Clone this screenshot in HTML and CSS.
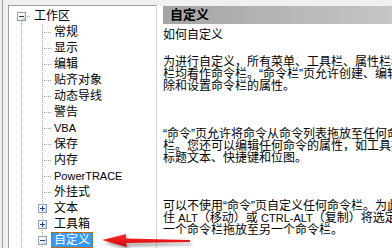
FILE: index.html
```html
<!DOCTYPE html>
<html>
<head>
<meta charset="utf-8">
<link rel="stylesheet" href="styles.css">
</head>
<body>
<div class="page">
  <div class="tree">
    <div class="row root">
      <span class="g1"><span class="box minus"></span></span>
      <span class="label">工作区</span>
    </div>
    <div class="row"><span class="g1 vl"></span><span class="g2 vl hc"></span><span class="label">常规</span></div>
    <div class="row"><span class="g1 vl"></span><span class="g2 vl hc"></span><span class="label">显示</span></div>
    <div class="row"><span class="g1 vl"></span><span class="g2 vl hc"></span><span class="label">编辑</span></div>
    <div class="row"><span class="g1 vl"></span><span class="g2 vl hc"></span><span class="label">贴齐对象</span></div>
    <div class="row"><span class="g1 vl"></span><span class="g2 vl hc"></span><span class="label">动态导线</span></div>
    <div class="row"><span class="g1 vl"></span><span class="g2 vl hc"></span><span class="label">警告</span></div>
    <div class="row"><span class="g1 vl"></span><span class="g2 vl hc"></span><span class="label lat">VBA</span></div>
    <div class="row"><span class="g1 vl"></span><span class="g2 vl hc"></span><span class="label">保存</span></div>
    <div class="row"><span class="g1 vl"></span><span class="g2 vl hc"></span><span class="label">内存</span></div>
    <div class="row"><span class="g1 vl"></span><span class="g2 vl hc"></span><span class="label lat">PowerTRACE</span></div>
    <div class="row"><span class="g1 vl"></span><span class="g2 vl hc"></span><span class="label">外挂式</span></div>
    <div class="row"><span class="g1 vl"></span><span class="g2 vl"><span class="box plus"></span></span><span class="label">文本</span></div>
    <div class="row"><span class="g1 vl"></span><span class="g2 vl"><span class="box plus"></span></span><span class="label">工具箱</span></div>
    <div class="row"><span class="g1 vl"></span><span class="g2 vl"><span class="box minus"></span></span><span class="label selected">自定义</span></div>
  </div>
  <div class="panel">
    <div class="header">自定义</div>
    <div class="content">
      <p class="p1">如何自定义</p>
      <p class="p2">为进行自定义，所有菜单、工具栏、属性栏和状态<br>栏均看作命令栏。“命令栏”页允许创建、编辑、删<br>除和设置命令栏的属性。</p>
      <p class="p3">“命令”页允许将命令从命令列表拖放至任何命令<br>栏。您还可以编辑任何命令的属性，如工具提示、<br>标题文本、快捷键和位图。</p>
      <p class="p4">可以不使用“命令”页自定义任何命令栏。为此，请按<br>住 <span class="lat">ALT</span>（移动）或 <span class="lat">CTRL-ALT</span>（复制）将选定项从<br>一个命令栏拖放至另一个命令栏。</p>
    </div>
  </div>
</div>
<svg class="arrow" width="110" height="22" viewBox="0 0 110 22">
  <defs>
    <filter id="blur" x="-20%" y="-50%" width="140%" height="200%"><feGaussianBlur stdDeviation="1.5"/></filter>
    <linearGradient id="red" x1="0" y1="0" x2="0" y2="1">
      <stop offset="0" stop-color="#ff3030"/>
      <stop offset="1" stop-color="#d00000"/>
    </linearGradient>
  </defs>
  <polygon points="9,17 33,11 33,16.5 97,17.5 97,19 33,20.5 34,24" fill="#000" opacity="0.35" filter="url(#blur)"/>
  <polygon points="7,14 31,8 31,12.5 95,14 95,16 31,17 32,21" fill="url(#red)"/>
</svg>
</body>
</html>
```
FILE: styles.css
```css
html, body {
  margin: 0;
  padding: 0;
}
body {
  width: 392px;
  height: 248px;
  overflow: hidden;
  background: #f0f0f0;
  font-family: "Liberation Sans", "Noto Sans CJK SC", sans-serif;
  font-size: 12px;
  color: #000;
  position: relative;
}
.page {
  display: flex;
  height: 248px;
  margin-left: 2px;
  border-left: 1px solid #a0a0a0;
  padding-top: 5px;
  box-sizing: border-box;
}
.tree {
  margin-left: 5px;
  width: 147px;
  flex: none;
  background: #fff;
  border-top: 1px solid #a0a0a0;
  border-left: 1px solid #a0a0a0;
  border-right: 1px solid #d8d8d8;
  padding-top: 2px;
  overflow: hidden;
}
.row {
  display: flex;
  height: 16px;
  align-items: center;
}
.g1 {
  width: 22px;
  height: 16px;
  flex: none;
  display: flex;
  align-items: center;
}
.g2 {
  width: 20px;
  height: 16px;
  flex: none;
  display: flex;
  align-items: center;
}
.vl {
  background-repeat: no-repeat;
  background-image: repeating-linear-gradient(to bottom, #a0a0a0 0 1px, transparent 1px 2px);
  background-size: 1px 16px;
}
.g1.vl { background-position: 12px 0; }
.g2.vl { background-position: 11px 0; }
.g2.hc {
  background-image:
    repeating-linear-gradient(to bottom, #a0a0a0 0 1px, transparent 1px 2px),
    repeating-linear-gradient(to right, #a0a0a0 0 1px, transparent 1px 2px);
  background-size: 1px 16px, 8px 1px;
  background-position: 11px 0, 13px 8px;
}
.root .g1 {
  background-repeat: no-repeat;
  background-image:
    repeating-linear-gradient(to bottom, #a0a0a0 0 1px, transparent 1px 2px),
    repeating-linear-gradient(to right, #a0a0a0 0 1px, transparent 1px 2px);
  background-size: 1px 4px, 5px 1px;
  background-position: 12px 13px, 18px 8px;
}
.box {
  width: 7px;
  height: 7px;
  border: 1px solid #8c9cb0;
  background: linear-gradient(135deg, #ffffff 30%, #d4d4cc);
  margin-left: 8px;
  margin-top: 1px;
  position: relative;
  flex: none;
}
.g2 .box { margin-left: 7px; }
.box::before {
  content: "";
  position: absolute;
  left: 1px;
  top: 3px;
  width: 5px;
  height: 1px;
  background: #1c3f94;
}
.box.plus::after {
  content: "";
  position: absolute;
  left: 3px;
  top: 1px;
  width: 1px;
  height: 5px;
  background: #1c3f94;
}
.label {
  padding: 0 2px;
  line-height: 14px;
  height: 14px;
  white-space: nowrap;
  border: 1px solid transparent;
}
.lat { font-size: 11px; }
.selected {
  background: #3399ff;
  color: #fff;
  border: 1px dotted #b85c00;
}
.panel {
  flex: 1;
  margin-top: 1px;
  background: #fff;
  overflow: hidden;
  min-width: 0;
}
.header {
  margin-left: 6px;
  height: 18px;
  line-height: 18px;
  padding-left: 7px;
  font-weight: bold;
  font-size: 13px;
  background: linear-gradient(to right, #a4a4a4, #c6c6c6);
  white-space: nowrap;
}
.content {
  padding-left: 6px;
  white-space: nowrap;
  line-height: 12px;
}
.content p { margin: 0; }
.p1 { margin-top: 5px !important; }
.p2 { margin-top: 15px !important; }
.p3 { margin-top: 36px !important; }
.p4 { margin-top: 36px !important; }
.arrow {
  position: absolute;
  left: 95px;
  top: 226px;
}
```
